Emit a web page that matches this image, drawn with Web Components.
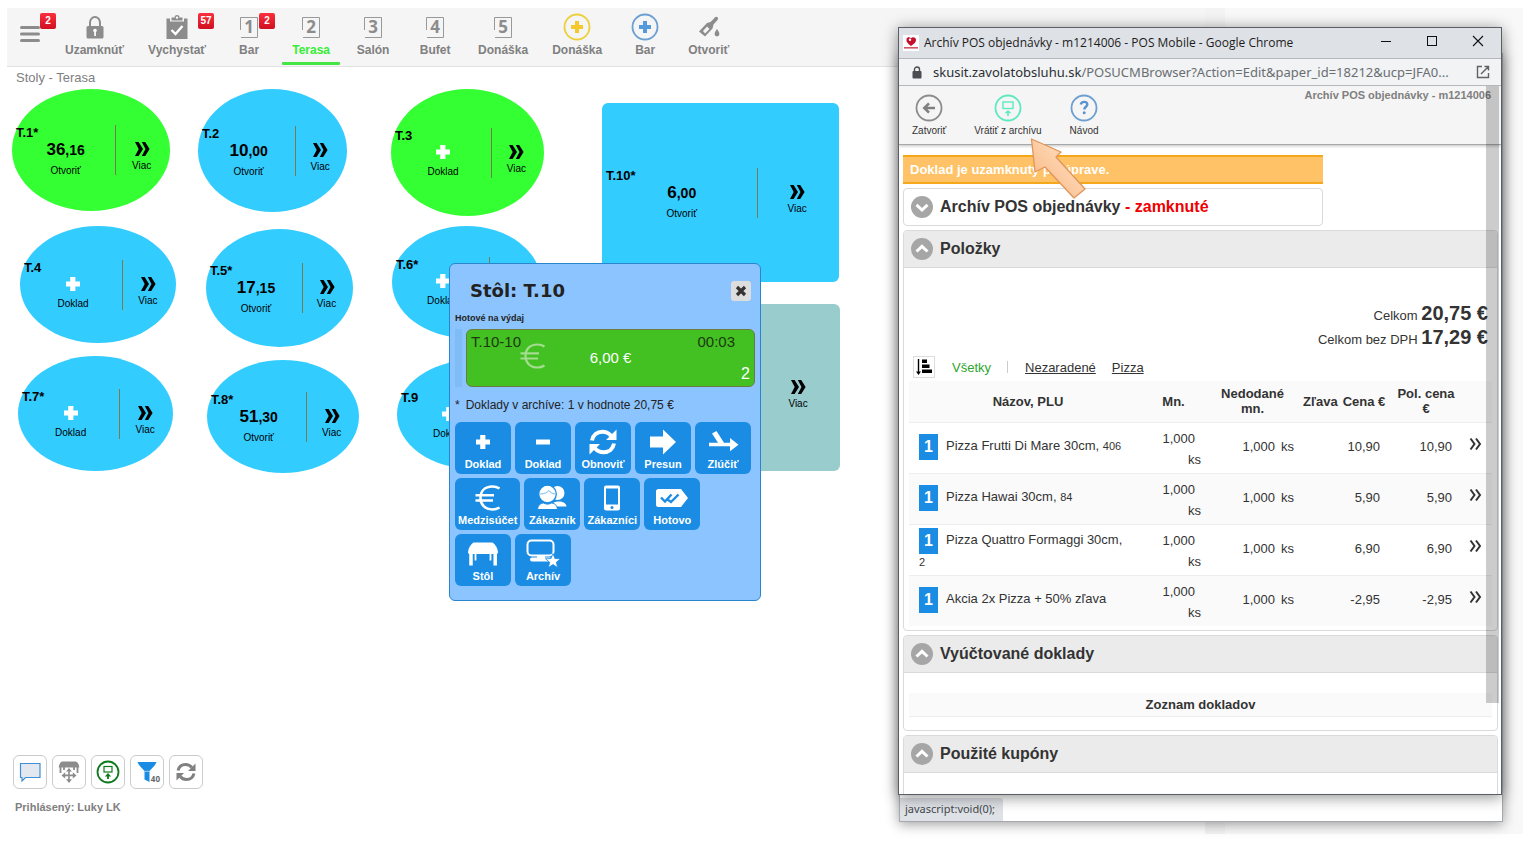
<!DOCTYPE html>
<html lang="sk">
<head>
<meta charset="utf-8">
<title>POS Mobile - Stoly</title>
<style>
  html, body { margin: 0; background: #fff; }
  body { font-family: "Liberation Sans", Arial, sans-serif; font-size: 13px; color: #333; }
</style>
</head>
<body>
<pos-app></pos-app>
<script>
const ICONS = {
  menu: [20, 18, '<g fill="#8c8c8c"><rect y="1" width="20" height="3" rx="1.5"/><rect y="7.500" width="20" height="3" rx="1.500"/><rect y="14" width="20" height="3" rx="1.500"/></g>'],
  lock: [18, 24, '<path d="M4 12V7.500a5 5.500 0 0 1 10 0V12" fill="none" stroke="#8c8c8c" stroke-width="2"/><rect x="0.500" y="11" width="17" height="12.500" rx="1.500" fill="#8c8c8c"/><circle cx="9" cy="15.500" r="1.800" fill="#fff"/><rect x="8.200" y="16" width="1.700" height="5" fill="#fff"/>'],
  clip: [22, 24, '<path d="M0.500 3.500H4v3h14v-3h3.500V24H.500z" fill="#8c8c8c"/><path d="M5.500 2.500h3a2.500 2.500 0 0 1 5 0h3v3h-11z" fill="#8c8c8c"/><circle cx="11" cy="2.600" r="1.200" fill="#fff"/><path d="M5.500 15l4 4 7-8" fill="none" stroke="#fff" stroke-width="2.400"/>'],
  frame: [18, 21, '<path d="M.500 13V.500H17.500V20.500H1" fill="none" stroke="#999"/>'],
  plusYellow: [28, 28, '<circle cx="14" cy="14" r="12.500" fill="none" stroke="#ecd03c" stroke-width="1.800"/><path d="M12 8h4v4h4v4h-4v4h-4v-4H8v-4h4z" fill="#f5c92c"/>'],
  plusBlue: [28, 28, '<circle cx="14" cy="14" r="12.500" fill="none" stroke="#6c9fd2" stroke-width="1.800"/><path d="M12 8h4v4h4v4h-4v4h-4v-4H8v-4h4z" fill="#559bdc"/>'],
  bottle: [22, 22, '<path d="M1 15.500L9 7l3.500-1L17 1.500l2.500 2.500L15.500 8.500l-1 4L7 20.500z" fill="#8c8c8c"/><path d="M5 15l4-4.500 2.500 2.500-4.500 4.500z" fill="#f5f5f5"/><circle cx="18.300" cy="2.500" r="1.800" fill="#8c8c8c"/><path d="M19 13c1.500 2.300 2.400 3.500 2.400 5a2.400 2.400 0 0 1-4.800 0c0-1.500.900-2.700 2.400-5z" fill="#8c8c8c"/>'],
  more: [16, 16, '<path d="M1 1h3.600L9 8l-4.400 7H1l3.700-7zM7.800 1h3.400L15.600 8l-4.400 7H7.800l3.700-7z" fill="#000"/>'],
  moreSmall: [14, 14, '<path d="M1.500 1.500L5.500 7l-4 5.500M7 1.500L11 7l-4 5.500" fill="none" stroke="#333" stroke-width="2"/>'],
  plus: [16, 16, '<path d="M5.200 1h5.200v4.500H15v5h-4.600V15H5.200v-4.500H1v-5h4.200z" fill="#fff"/>'],
  minus: [16, 16, '<rect x="1" y="5.500" width="14" height="5" fill="#fff"/>'],
  close: [12, 12, '<path d="M2 2l8 8M10 2l-8 8" stroke="#333" stroke-width="3.200"/>'],
  refreshBig: [28, 28, '<g fill="none" stroke="#fff" stroke-width="4"><path d="M3 12.500C4 7 8 3.800 13.500 3.800c3.600 0 6.500 1.600 8.500 4"/><path d="M25 15.500c-1 5.500-5 8.700-10.500 8.700-3.600 0-6.500-1.600-8.500-4"/></g><path d="M27.500 1.500V12H17zM.500 26.500V16H11z" fill="#fff"/>'],
  arrowRight: [28, 28, '<path d="M1 8.500h13V1.500L27 14 14 26.500v-7H1z" fill="#fff"/>'],
  merge: [32, 28, '<path d="M2 14.800h9L5 5.500 9.500 3l7.500 11.800h6V10l8.500 6.800-8.500 6.500v-5H2z" fill="#fff"/>'],
  euroWhite: [26, 26, '<path d="M24.500 3.500C22.500 2.200 20 1.500 17.500 1.500 9.500 1.500 5.500 6.500 5.500 13s4.500 11.500 12 11.500c2.500 0 5-.7 7-2M.500 10.300H19M.500 15.500H18" fill="none" stroke="#fff" stroke-width="2.600"/>'],
  euroPale: [26, 26, '<path d="M24.500 3.500C22.500 2.200 20 1.500 17.500 1.500 9.500 1.500 5.500 6.500 5.500 13s4.500 11.500 12 11.500c2.500 0 5-.7 7-2M.500 10.300H19M.500 15.500H18" fill="none" stroke="#a4dc90" stroke-width="2.200"/>'],
  people: [30, 26, '<circle cx="20.500" cy="8" r="7" fill="#fff"/><path d="M14 21.500c1-4 4-5 8-5s7 1.500 7.500 5z" fill="#fff"/><circle cx="10.500" cy="9" r="8.800" fill="#fff" stroke="#1a8ce3" stroke-width="1.300"/><path d="M3 9c5-.200 7-1.500 9-3.500 1.500 2 3 3 6 3.500" fill="none" stroke="#1a8ce3" stroke-width=".600"/><path d="M.500 24.500c.500-4.500 3-6 6-6.500 3 1.500 5 1.500 8 0 3.500.500 5.500 2 6 6.500z" fill="#fff" stroke="#1a8ce3"/>'],
  phone: [18, 26, '<rect x="1" y=".500" width="16" height="25" rx="2" fill="#fff"/><rect x="3" y="3.500" width="12" height="16" fill="#1a8ce3"/><circle cx="9" cy="22.500" r="1.500" fill="#1a8ce3"/>'],
  tag: [34, 20, '<path d="M3.500 1h22.500l7 9-7 9H3.500A2.500 2.500 0 0 1 1 16.500v-13A2.500 2.500 0 0 1 3.500 1z" fill="#fff"/><path d="M6 9.500l4 4 6.500-7M12.500 11.500l3.500 2.500L23.500 6.500" fill="none" stroke="#1a8ce3" stroke-width="2.400"/>'],
  table: [32, 26, '<path d="M6.500 1.500h19C28 3 30.500 6.500 31 11c0 1.500-.800 2-2 2H3c-1.200 0-2-.500-2-2C1.500 6.500 4 3 6.500 1.500z" fill="#fff"/><path d="M4 12v12.500M28.200 12v12.500" stroke="#fff" stroke-width="3.500"/><path d="M8.500 12v7.500M23.500 12v7.500" stroke="#fff" stroke-width="1.800"/>'],
  archive: [34, 30, '<rect x="1.500" y="1.500" width="26" height="15" rx="4" fill="none" stroke="#fff" stroke-width="2"/><rect x="11" y="16.500" width="8" height="3" fill="#fff"/><rect x="4" y="18.500" width="22" height="4" rx="2" fill="#fff"/><path d="M27 14.500l2 5 5.500.300-4.200 3.500 1.400 5.300L27 25.600l-4.700 3 1.400-5.300-4.200-3.500 5.500-.300z" fill="#fff" stroke="#1a8ce3" stroke-width=".800"/>'],
  chat: [22, 20, '<path d="M1.500 1.500h19.500v14H6.500L3 19v-3.500H1.500z" fill="#e3e8f0" stroke="#3f8fd6" stroke-width="1.200"/>'],
  tableMove: [22, 22, '<path d="M4 .500h14c2 1 3 3 3.300 6H.700C1 3.500 2 1.500 4 .500z" fill="#8c8c8c"/><path d="M2.500 6v6M19.500 6v6M6 6v3M16 6v3" stroke="#8c8c8c" stroke-width="1.800"/><path d="M10.200 9h1.600v4.500h3v-2.300l3.700 3.200-3.700 3.200v-2.300h-3v3h2.200L11 22l-3-3.700h2.200v-3h-3v2.300L3.500 14.400l3.700-3.200v2.300h3z" fill="#8c8c8c"/><path d="M11 7l3 3.500H8z" fill="#8c8c8c"/>'],
  restoreGreen: [24, 24, '<circle cx="12" cy="12" r="10.500" fill="none" stroke="#0e7a1e" stroke-width="1.800"/><rect x="8" y="6.500" width="8" height="5.500" fill="none" stroke="#0e7a1e" stroke-width="1.200"/><path d="M12 13l3.200 3.500h-2.300V19h-1.800v-2.500H8.800z" fill="#0e7a1e"/>'],
  filter: [20, 22, '<path d="M.500 1h19l-1.500 3H2z" fill="#1a8ce3"/><path d="M2 4h16l-5.500 6V21L7.500 18.500V10z" fill="#1a8ce3"/><path d="M7.500 10.300h5" stroke="#fff" stroke-width=".600"/>'],
  refreshGray: [22, 22, '<g fill="none" stroke="#808080" stroke-width="3"><path d="M3 9.500C4 5.500 7 3.500 10.500 3.500c2.600 0 4.800 1.100 6.300 3"/><path d="M19 12.500c-1 4-4 6-7.500 6-2.600 0-4.800-1.100-6.300-3"/></g><path d="M20.500 2.500V10H13zM1.500 19.500V12H9z" fill="#808080"/>'],
  favicon: [16, 16, '<rect width="16" height="16" fill="#fff"/><path d="M8 11C4.500 8.500 3 6.500 3.500 4.200 4 2 6.500 1.600 8 3.200c1.500-1.600 4.500-1 5 1.200C13.400 6.600 11.500 8.500 8 11z" fill="#c8102e"/><circle cx="7" cy="4.800" r="1.200" fill="#fff"/><rect x="1" y="12" width="14" height="1.600" fill="#d65565"/>'],
  padlock: [10, 13, '<rect x=".500" y="5" width="9" height="7.500" rx="1" fill="#4a4e52"/><path d="M2.500 5.500v-2a2.500 2.500 0 0 1 5 0v2" fill="none" stroke="#4a4e52" stroke-width="1.400"/>'],
  winMin: [12, 12, '<path d="M1 6.500h10" stroke="#111"/>'],
  winMax: [12, 12, '<rect x="1.500" y="1.500" width="9" height="9" fill="none" stroke="#111"/>'],
  winClose: [12, 12, '<path d="M1 1l10 10M11 1L1 11" stroke="#111" stroke-width="1.100"/>'],
  external: [14, 14, '<path d="M6 1.500H1.500v11h11V8M8.500 1.500h4v4M12.300 1.700L5 9" fill="none" stroke="#5f6368" stroke-width="1.400"/>'],
  back: [28, 28, '<circle cx="14" cy="14" r="12.500" fill="none" stroke="#8c8c8c" stroke-width="1.800"/><path d="M20 14H10M14 9.300L9.300 14l4.700 4.700" fill="none" stroke="#808080" stroke-width="2.600"/>'],
  restore: [28, 28, '<circle cx="14" cy="14" r="12.500" fill="none" stroke="#5deabf" stroke-width="1.800"/><rect x="9" y="8" width="10" height="6.500" fill="none" stroke="#5deabf" stroke-width="1.400"/><path d="M14 16l3.500 3.300h-2.700V22h-1.600v-2.700h-2.700z" fill="#5deabf"/>'],
  help: [28, 28, '<circle cx="14" cy="14" r="12.500" fill="none" stroke="#6c9fd2" stroke-width="1.800"/><path d="M10.800 10.500c.300-1.800 1.500-2.600 3.300-2.600s3.200 1 3.200 2.600c0 2.200-3 2.400-3 5" fill="none" stroke="#5a94cf" stroke-width="2.400"/><circle cx="14.200" cy="18.800" r="1.500" fill="#5a94cf"/>'],
  chevUp: [22, 22, '<circle cx="11" cy="11" r="11" fill="#a6a6a6"/><path d="M5.500 13.500L11 8.300l5.500 5.200" fill="none" stroke="#fff" stroke-width="3"/>'],
  chevDown: [22, 22, '<circle cx="11" cy="11" r="11" fill="#a6a6a6"/><path d="M5.500 8.800L11 14l5.500-5.200" fill="none" stroke="#fff" stroke-width="3"/>'],
  sort: [18, 18, '<path d="M3.500 1v14" stroke="#000" stroke-width="1.400"/><path d="M1 13.500h5L3.500 17z"/><rect x="7" y="1.500" width="5" height="3.500"/><rect x="7" y="6.500" width="7.500" height="3.500"/><rect x="7" y="11.500" width="10" height="3.500"/>'],
  pointer: [60, 66, '<defs><linearGradient id="g" x1="0" y1="1" x2="1" y2="0"><stop offset="0" stop-color="#f9b27a"/><stop offset=".6" stop-color="#fdd3ae"/><stop offset="1" stop-color="#f7b077"/></linearGradient></defs><path d="M1.500 3L31 16 26 21 55 53 44 62 15 31 5 36z" fill="url(#g)" stroke="#e0955a" stroke-width="1.300" stroke-linejoin="round"/>']
};

/* Defines an element whose shadow root is built from the given render function. */
function define(name, css, render) {
  customElements.define(name, class extends HTMLElement {
    connectedCallback() {
      if (this.shadowRoot) return;
      const t = document.createElement('template');
      t.innerHTML = `<style>*{box-sizing:border-box}[hidden]{display:none}button{font:inherit;color:inherit;background:none;border:0;padding:0;margin:0}${css}</style>` + render(k => this.getAttribute(k) || '');
      this.attachShadow({ mode: 'open' }).append(t.content.cloneNode(true));
    }
  });
}

define('ui-icon', ':host{display:inline-flex;flex:none}svg{display:block}', a => {
  const [w, h, body] = ICONS[a('name')];
  return `<svg width="${w}" height="${h}" viewBox="0 0 ${w} ${h}" aria-hidden="true">${body}</svg>`;
});

define('count-badge', `
  :host{display:block;min-width:16px;height:16px;border-radius:2px;background:linear-gradient(#fb2f3d,#cf1020);
    color:#fff;font:bold 10px/15px "Liberation Sans",sans-serif;text-align:center}`,
  () => '<slot></slot>');

define('tool-item', `
  :host{display:block}
  button{position:relative;display:flex;flex-direction:column;align-items:center;min-width:58px;height:57px;padding:4px 10px 0;
    font:bold 12px/16px "Liberation Sans",sans-serif;color:#808080}
  .pic{height:30px;display:grid;place-items:center}
  .pic>*{grid-area:1/1}
  .num{font:bold 17px/20px "Open Sans",sans-serif;color:#8c8c8c}
  :host([active]) button{color:#33ee33}
  :host([active]) button::after{content:"";position:absolute;left:0;right:0;bottom:0;height:3px;border-radius:1px;background:#43e643}
  count-badge{position:absolute;top:5px;left:calc(50% + 21px)}
  :host([digit]) count-badge{left:calc(50% + 10px)}`,
  a => `<button type="button"><span class="pic">${a('digit') ? `<ui-icon name="frame"></ui-icon><span class="num">${a('digit')}</span>` : `<ui-icon name="${a('icon')}"></ui-icon>`}</span>
    <slot></slot>${a('badge') ? `<count-badge>${a('badge')}</count-badge>` : ''}</button>`);

define('pos-toolbar', `
  :host{display:flex;gap:4px;height:59px;background:#f5f5f5;border-bottom:1px solid #e2e2e2}
  .menu{position:relative;width:44px;padding:7px 0 0 13px;display:flex;align-items:center;height:44px}
  .menu count-badge{position:absolute;left:33px;top:5px}`,
  () => `<button class="menu" type="button" aria-label="Menu"><ui-icon name="menu"></ui-icon><count-badge>2</count-badge></button>
    <tool-item icon="lock">Uzamknúť</tool-item>
    <tool-item icon="clip" badge="57">Vychystať</tool-item>
    <tool-item digit="1" badge="2">Bar</tool-item>
    <tool-item digit="2" active>Terasa</tool-item>
    <tool-item digit="3">Salón</tool-item>
    <tool-item digit="4">Bufet</tool-item>
    <tool-item digit="5">Donáška</tool-item>
    <tool-item icon="plusYellow">Donáška</tool-item>
    <tool-item icon="plusBlue">Bar</tool-item>
    <tool-item icon="bottle">Otvoriť</tool-item>`);

define('floor-table', `
  :host{display:flex;align-items:center;background:#33ccff;border-radius:50%;color:#000}
  :host([square]){border-radius:6px}
  button{height:50px;font:10px/14px "Liberation Sans",sans-serif}
  .main{flex:0 0 66%;display:flex;flex-direction:column;align-items:center;padding-left:4px;border-right:1px solid #777c50}
  .name{align-self:flex-start;font-weight:bold;font-size:13px;line-height:16px}
  .sum{height:18px;font-weight:bold;font-size:17px;line-height:18px;margin-bottom:5px;display:flex;align-items:center}
  small{font-size:14px}
  .more{flex:1;display:flex;flex-direction:column;align-items:center;gap:2px;padding:16px 3px 0 0}`,
  a => {
    const [w, f] = a('sum').split(',');
    const left = a('name') ? `<span class="name">${a('name')}</span>
      <span class="sum">${a('sum') ? `<span>${w}<small>,${f}</small></span>` : '<ui-icon name="plus"></ui-icon>'}</span>
      <span>${a('sum') ? 'Otvoriť' : 'Doklad'}</span>` : '';
    const right = a('compact') ? '' : '<button class="more" type="button"><ui-icon name="more"></ui-icon><span>Viac</span></button>';
    return `<button class="main" type="button">${left}</button>${right}`;
  });

/* name, sum, x, y, width, height, colour, extra attributes of each table on the free floor canvas */
const TABLES = [
  ['T.1*', '36,16', 5, 5, 158, 122, '#33ff33'], ['T.2', '10,00', 191, 5, 149, 123], ['T.3', '', 384, 5, 153, 127, '#33ff33'],
  ['T.4', '', 13, 142, 156, 117], ['T.5*', '17,15', 199, 145, 147, 118], ['T.6*', '', 385, 142, 149, 112, '', 'compact="1"'],
  ['T.7*', '', 11, 272, 155, 115], ['T.8*', '51,30', 200, 276, 152, 113], ['T.9', '', 390, 276, 152, 109, '', 'compact="1"'],
  ['T.10*', '6,00', 595, 19, 237, 179, '', 'square'], ['', '', 595, 220, 238, 167, '#99cccc', 'square']
];
define('floor-plan', `
  :host{display:block;position:relative;flex:1}
  floor-table{position:absolute}`,
  () => TABLES.map(([n, s, x, y, w, h, c, extra]) =>
    `<floor-table name="${n}" sum="${s}" ${extra || ''} style="left:${x}px;top:${y}px;width:${w}px;height:${h}px;${c ? `background:${c}` : ''}"></floor-table>`).join(''));

define('status-tools', `
  :host{display:block;padding:0 6px 19px}
  .row{display:flex;gap:5px;margin-bottom:10px}
  .row button{position:relative;width:34px;height:34px;border:1px solid #ccc;border-radius:6px;background:#fff;display:grid;place-items:center}
  .n{position:absolute;right:3px;bottom:4px;font:bold 8px/10px "Open Sans",sans-serif;color:#666}
  p{margin:0 0 0 2px;font:bold 11px/16px "Liberation Sans",sans-serif;color:#808080}`,
  () => `<div class="row"><button type="button" aria-label="Správy"><ui-icon name="chat"></ui-icon></button><button type="button" aria-label="Rozmiestniť"><ui-icon name="tableMove"></ui-icon></button><button type="button" aria-label="Archív"><ui-icon name="restoreGreen"></ui-icon></button><button type="button" aria-label="Filter"><ui-icon name="filter"></ui-icon><span class="n">40</span></button><button type="button" aria-label="Obnoviť"><ui-icon name="refreshGray"></ui-icon></button></div>
    <p>Prihlásený: Luky LK</p>`);

define('action-tile', `
  :host{display:block}
  button{min-width:56px;height:52px;padding:4px 3px 3px;border-radius:6px;background:#1a8ce3;color:#fff;
    display:flex;flex-direction:column;align-items:center;font:bold 11px/13px "Liberation Sans",sans-serif}
  span{flex:1;display:grid;place-items:center;height:32px}`,
  a => `<button type="button"><span><ui-icon name="${a('icon')}"></ui-icon></span><slot></slot></button>`);

define('table-dialog', `
  :host{display:block;height:338px;padding:0 5px;background:#8cc4ff;border:1px solid #2a86cc;border-radius:6px;color:#222}
  header{display:flex;align-items:center;justify-content:space-between;height:48px;padding:6px 4px 0 15px}
  h2{margin:0;font:bold 18px/24px "DejaVu Sans",sans-serif;color:#222}
  header button{width:20px;height:20px;border-radius:3px;background:#ddd;display:grid;place-items:center}
  .state{margin:0 0 5px;font:bold 9px/12px "Liberation Sans",sans-serif}
  .order{display:flex;gap:4px;margin-bottom:9px}
  .order::before{content:"";width:7px;background:#7fbcf6}
  .card{flex:1;display:grid;grid-template:1fr/1fr auto 1fr;height:58px;padding:2px 4px;border:1px solid #6c7c3c;border-radius:6px;background:#43c022;font-size:15px;line-height:20px;color:#1c3a10}
  .id{grid-area:1/1;text-align:left}.time{grid-area:1/3;text-align:right;padding-right:15px}
  .eur{grid-area:1/1;justify-self:end;align-self:center;padding-right:44px}
  .sum{grid-area:1/2;color:#fff;align-self:center}.cnt{grid-area:1/3;align-self:end;text-align:right;color:#fff;font-size:16px}
  .arch{display:flex;gap:6px;margin:0 0 8px;font-size:12px;line-height:18px}
  .tiles{display:flex;flex-wrap:wrap;gap:4px}`,
  () => `<header><h2>Stôl: T.10</h2><button type="button" aria-label="Zavrieť"><ui-icon name="close"></ui-icon></button></header>
    <p class="state">Hotové na výdaj</p>
    <div class="order"><button class="card" type="button"><span class="id">T.10-10</span><span class="eur"><ui-icon name="euroPale"></ui-icon></span><span class="time">00:03</span><span class="sum">6,00 €</span><span class="cnt">2</span></button></div>
    <p class="arch"><span>*</span><span>Doklady v archíve: 1 v hodnote 20,75 €</span></p>
    <div class="tiles">
      <action-tile icon="plus">Doklad</action-tile><action-tile icon="minus">Doklad</action-tile><action-tile icon="refreshBig">Obnoviť</action-tile><action-tile icon="arrowRight">Presun</action-tile><action-tile icon="merge">Zlúčiť</action-tile>
      <action-tile icon="euroWhite">Medzisúčet</action-tile><action-tile icon="people">Zákazník</action-tile><action-tile icon="phone">Zákazníci</action-tile><action-tile icon="tag">Hotovo</action-tile>
      <action-tile icon="table">Stôl</action-tile><action-tile icon="archive">Archív</action-tile>
    </div>`);

define('fold-panel', `
  :host{display:block;border:1px solid #dadada;border-radius:4px;background:#fff;margin-bottom:4px}
  button{display:flex;align-items:center;gap:7px;width:100%;height:36px;padding:0 7px;text-align:left}
  h3{margin:0;font:bold 16px/20px "Liberation Sans",sans-serif;color:#333}
  :host([open]) button{height:37px;background:#ebebeb;border-bottom:1px solid #dadada;border-radius:3px 3px 0 0}
  em{font-style:normal;color:#f00000}`,
  a => `<button type="button"><ui-icon name="${a('open') ? 'chevUp' : 'chevDown'}"></ui-icon><h3>${a('heading')}${a('note') ? ` <em>${a('note')}</em>` : ''}</h3></button><slot></slot>`);

const ITEMS = [['Pizza Frutti Di Mare 30cm,', '406', '10,90'], ['Pizza Hawai 30cm,', '84', '5,90'], ['Pizza Quattro Formaggi 30cm,', '2', '6,90'], ['Akcia 2x Pizza + 50% zľava', '', '-2,95']];
define('order-items', `
  :host{display:block;padding:35px 5px 4px;color:#333}
  .totals{margin:0 4px 0 0;text-align:right;font-size:13px;line-height:23px}
  .totals b{font-size:20px;line-height:20px}
  .filter{display:flex;align-items:center;height:22px;margin:5px 0 3px 4px}
  .filter button{width:22px;height:22px;border:1px solid #ddd;display:grid;place-items:center;margin-right:17px}
  .filter b{color:#2ca52c;font-weight:normal}
  .filter i{width:1px;height:12px;background:#ccc;margin:0 17px 0 16px}
  a{color:#333;margin-right:16px}
  table{width:100%;border-collapse:collapse;table-layout:fixed;font-size:13px;line-height:16px}
  th{height:41px;padding:0 4px;line-height:15px}
  th:first-child,td:first-child{padding-left:10px}
  tr{border-bottom:1px solid #eee}
  thead tr,tbody tr:nth-child(even){background:#fafafa}
  tbody tr:last-child{border:0}
  td{height:51px;padding:0 5px 1px;text-align:right}
  td:first-child{text-align:left;padding-right:10px}
  td.q{line-height:21px;padding-top:4px}
  .n{margin-right:6px}
  td.m{padding-right:10px}
  .no{display:inline-block;vertical-align:middle;width:19px;height:26px;margin-right:8px;background:#1a8ce3;color:#fff;font:bold 16px/26px "Liberation Sans",sans-serif;text-align:center}
  small{font-size:11px}
  td:last-child{text-align:center;padding:0 2px 4px 0}
  td button{vertical-align:middle}`,
  () => `<p class="totals">Celkom <b>20,75 €</b><br>Celkom bez DPH <b>17,29 €</b></p>
    <div class="filter"><button type="button" aria-label="Zoradiť"><ui-icon name="sort"></ui-icon></button><b>Všetky</b><i></i><a href="#n">Nezaradené</a><a href="#p">Pizza</a></div>
    <table><colgroup><col><col style="width:65px"><col style="width:93px"><col style="width:39px"><col style="width:52px"><col style="width:72px"><col style="width:30px"></colgroup>
    <thead><tr><th>Názov, PLU</th><th>Mn.</th><th>Nedodané mn.</th><th>Zľava</th><th>Cena&nbsp;€</th><th>Pol. cena €</th><th></th></tr></thead>
    <tbody>${ITEMS.map(([n, plu, c]) => `<tr><td><span class="no">1</span>${n} <small>${plu}</small></td><td class="q"><span class="n">1,000</span><br>ks</td><td><span class="n">1,000</span>ks</td><td></td><td class="m">${c}</td><td class="m">${c}</td><td><button type="button" aria-label="Viac"><ui-icon name="moreSmall"></ui-icon></button></td></tr>`).join('')}</tbody></table>`);

define('round-tool', `
  :host{display:block}
  button{display:flex;flex-direction:column;align-items:center;gap:1px;font:10px/16px "Liberation Sans",sans-serif;color:#333}`,
  a => `<button type="button"><ui-icon name="${a('icon')}"></ui-icon><slot></slot></button>`);

define('browser-window', `
  :host{display:flex;flex-direction:column;background:#fff;border:1px solid #5a5f66;box-shadow:0 2px 14px rgba(0,0,0,.45);overflow:hidden}
  .title{flex:none;display:flex;align-items:center;height:31px;padding:0 17px 0 4px;background:#dee1e6;border-bottom:1px solid #b4b8bc;font:12px/16px "Open Sans",sans-serif;color:#1c1c1c}
  .title span{flex:1;margin-left:5px;white-space:nowrap}
  .title button{width:12px;margin-left:34px}
  .url{flex:none;display:flex;align-items:center;height:27px;padding:0 11px 0 13px;background:#f1f3f4;border-bottom:1px solid #b4b8bc;font:13px/20px "Noto Sans",sans-serif;color:#6a6e72}
  .url p{flex:1;margin:0 0 0 11px;white-space:nowrap}.url b{font-weight:normal;color:#2c2f33}
  .view{flex:1;position:relative;min-height:0;overflow:hidden}
  .bar{display:flex;align-items:flex-start;gap:28px;height:59px;padding:8px 10px 0 13px;background:#f5f5f5;border-bottom:1px solid #a8a8a8;box-shadow:0 1px 3px rgba(0,0,0,.25)}
  .bar p{flex:1;margin:-6px 0 0;text-align:right;font:bold 11px/14px "Liberation Sans",sans-serif;color:#808080}
  .body{padding:10px 3px 0 4px}
  .narrow{width:420px}
  .alert{margin:0 0 4px;height:29px;padding:0 7px;border:solid #f5a81c;border-width:2px 0;background:#ffc266;color:#fff;font:bold 13px/25px "Liberation Sans",sans-serif}
  .list{margin:20px 5px 13px;padding:0;background:#fafafa;border-bottom:1px solid #eee;text-align:center;font:bold 13px/23px "Liberation Sans",sans-serif}
  .scroll{position:absolute;right:2px;top:0;width:13px;height:617px;background:rgba(0,0,0,.2)}`,
  () => `<div class="title"><ui-icon name="favicon"></ui-icon><span>Archív POS objednávky - m1214006 - POS Mobile - Google Chrome</span><button type="button" aria-label="Minimalizovať"><ui-icon name="winMin"></ui-icon></button><button type="button" aria-label="Maximalizovať"><ui-icon name="winMax"></ui-icon></button><button type="button" aria-label="Zavrieť"><ui-icon name="winClose"></ui-icon></button></div>
    <div class="url"><ui-icon name="padlock"></ui-icon><p><b>skusit.zavolatobsluhu.sk</b>/POSUCMBrowser?Action=Edit&amp;paper_id=18212&amp;ucp=JFA0...</p><ui-icon name="external"></ui-icon></div>
    <div class="view">
      <div class="bar"><round-tool icon="back">Zatvoriť</round-tool><round-tool icon="restore">Vrátiť z archívu</round-tool><round-tool icon="help">Návod</round-tool><p>Archív POS objednávky - m1214006</p></div>
      <div class="body">
        <p class="alert narrow">Doklad je uzamknutý pri úprave.</p>
        <fold-panel class="narrow" heading="Archív POS objednávky" note="- zamknuté"></fold-panel>
        <fold-panel open="1" heading="Položky"><order-items></order-items></fold-panel>
        <fold-panel open="1" heading="Vyúčtované doklady"><p class="list">Zoznam dokladov</p></fold-panel>
        <fold-panel open="1" heading="Použité kupóny"><p class="list">&nbsp;</p></fold-panel>
      </div>
      <div class="scroll"></div>
    </div>`);

define('status-window', `
  :host{display:flex;align-items:flex-end;background:#fff;border:1px solid #a5a9ad;box-shadow:0 2px 12px rgba(0,0,0,.4)}
  span{padding:0 8px 0 5px;height:23px;border-radius:0 3px 0 0;background:#dee1e6;font:11px/22px "Noto Sans",sans-serif;color:#45494d}`,
  () => '<span>javascript:void(0);</span>');

define('pos-app', `
  :host{display:grid;position:relative;grid-template-columns:1fr 20px 298px;min-height:100vh;padding:8px 17px 17px 7px;box-sizing:border-box;overflow:hidden}
  main{display:flex;flex-direction:column;min-width:0}
  h1{margin:0;padding:4px 9px 0;font:13px/14px "Liberation Sans",sans-serif;color:#808080;height:17px;box-sizing:border-box}
  .gutter{background:#f3f3f3}.side{background:#f8f8f8}
  table-dialog{position:absolute;left:449px;top:263px;width:312px}
  status-window{position:absolute;right:37px;top:53px;width:604px;height:769px}
  browser-window{position:absolute;right:38px;top:27px;width:604px;height:768px}
  .pointer{position:absolute;right:450px;top:136px}`,
  () => `<main><pos-toolbar></pos-toolbar><h1>Stoly - Terasa</h1><floor-plan></floor-plan><status-tools></status-tools></main>
    <div class="gutter"></div><div class="side"></div>
    <table-dialog></table-dialog><status-window></status-window><browser-window></browser-window><ui-icon class="pointer" name="pointer"></ui-icon>`);
</script>
</body>
</html>
